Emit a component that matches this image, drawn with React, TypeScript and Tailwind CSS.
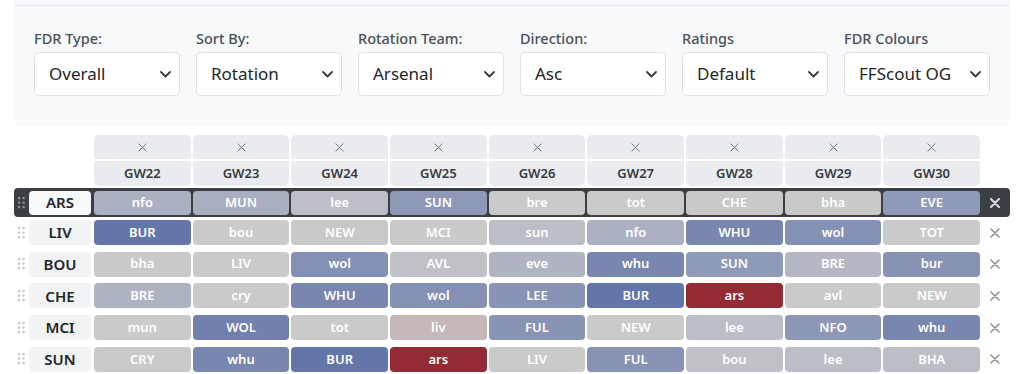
import React from "react";

const filters = [
  { label: "FDR Type:", value: "Overall" },
  { label: "Sort By:", value: "Rotation" },
  { label: "Rotation Team:", value: "Arsenal" },
  { label: "Direction:", value: "Asc" },
  { label: "Ratings", value: "Default" },
  { label: "FDR Colours", value: "FFScout OG" },
];

const gws = ["GW22", "GW23", "GW24", "GW25", "GW26", "GW27", "GW28", "GW29", "GW30"];

type Cell = [string, string];
const rows: { team: string; cells: Cell[] }[] = [
  {
    team: "ARS",
    cells: [
      ["nfo", "#aab0c1"], ["MUN", "#a9afc0"], ["lee", "#bebfc6"], ["SUN", "#8e99b7"], ["bre", "#cacaca"],
      ["tot", "#cacaca"], ["CHE", "#c9c9c9"], ["bha", "#c9c9c9"], ["EVE", "#8e9ab8"],
    ],
  },
  {
    team: "LIV",
    cells: [
      ["BUR", "#6476a9"], ["bou", "#cbcbcb"], ["NEW", "#c8c8c8"], ["MCI", "#c9c9c9"], ["sun", "#bcbec6"],
      ["nfo", "#abb1c3"], ["WHU", "#7986b0"], ["wol", "#8591b4"], ["TOT", "#cacaca"],
    ],
  },
  {
    team: "BOU",
    cells: [
      ["bha", "#c9c9c9"], ["LIV", "#cacaca"], ["wol", "#8591b4"], ["AVL", "#c0c1c7"], ["eve", "#b0b4c2"],
      ["whu", "#7986b0"], ["SUN", "#8f9ab8"], ["BRE", "#b4b7c3"], ["bur", "#8892b5"],
    ],
  },
  {
    team: "CHE",
    cells: [
      ["BRE", "#aeb3c1"], ["cry", "#cacaca"], ["WHU", "#7986b0"], ["wol", "#8591b4"], ["LEE", "#8893b5"],
      ["BUR", "#6476a9"], ["ars", "#932b35"], ["avl", "#cacaca"], ["NEW", "#cacaca"],
    ],
  },
  {
    team: "MCI",
    cells: [
      ["mun", "#cacaca"], ["WOL", "#7380ad"], ["tot", "#cacaca"], ["liv", "#c4b8b9"], ["FUL", "#8893b5"],
      ["NEW", "#cacaca"], ["lee", "#bcbec6"], ["NFO", "#8d98b7"], ["whu", "#7986b0"],
    ],
  },
  {
    team: "SUN",
    cells: [
      ["CRY", "#cacaca"], ["whu", "#7986b0"], ["BUR", "#6476a9"], ["ars", "#932b35"], ["LIV", "#cacaca"],
      ["FUL", "#8893b5"], ["bou", "#c0c1c7"], ["lee", "#bcbec6"], ["BHA", "#bcbec6"],
    ],
  },
];

function Chevron() {
  return (
    <svg width="11" height="7" viewBox="0 0 11 7" fill="none">
      <path d="M1 1l4.5 4.5L10 1" stroke="#343a40" strokeWidth="1.8" strokeLinecap="round" strokeLinejoin="round" />
    </svg>
  );
}

function Handle({ dark }: { dark?: boolean }) {
  const c = dark ? "#8d9196" : "#c3c7cb";
  return (
    <svg width="7" height="12" viewBox="0 0 7 12">
      {[0, 1, 2].map((r) =>
        [0, 1].map((col) => <rect key={`${r}-${col}`} x={col * 4.5} y={r * 4.5} width="2.2" height="2.2" fill={c} />)
      )}
    </svg>
  );
}

function XIcon({ size, color, w }: { size: number; color: string; w: number }) {
  return (
    <svg width={size} height={size} viewBox="0 0 10 10">
      <path d="M1 1l8 8M9 1l-8 8" stroke={color} strokeWidth={w} strokeLinecap="round" />
    </svg>
  );
}

export default function App() {
  return (
    <div className="w-[1024px] h-[374px] overflow-hidden bg-white px-[14px] font-['Noto_Sans',sans-serif]">
      {/* Filter panel */}
      <div className="bg-[#f8f9fa] rounded-b-[8px] h-[126px]">
        <div className="h-[6px] border-b border-[#e5e7eb]" />
        <div className="flex gap-[16px] pl-[20px] pt-[22px]">
          {filters.map((f) => (
            <div key={f.label} className="flex flex-col w-[146px]">
              <div className="text-[14.5px] leading-[20px] font-medium text-[#495057] h-[24px]">{f.label}</div>
              <div className="h-[44px] bg-white border border-[#dee2e6] rounded-[5px] flex items-center justify-between pl-[14px] pr-[8px]">
                <span className="text-[17px] text-[#212529]">{f.value}</span>
                <Chevron />
              </div>
            </div>
          ))}
        </div>
      </div>

      {/* Header */}
      <div className="flex mt-[9px] pl-[80px] pr-[30px]">
        <div className="flex flex-1 gap-[2px]">
          {gws.map((g) => (
            <div key={g} className="flex-1 flex flex-col gap-[2px] rounded-[5px] overflow-hidden">
              <div className="h-[24px] bg-[#e9ebee] flex items-center justify-center">
                <XIcon size={9} color="#6c757d" w={1.1} />
              </div>
              <div className="h-[25px] bg-[#e9ebee] flex items-center justify-center text-[13px] font-semibold text-[#343a40]">
                {g}
              </div>
            </div>
          ))}
        </div>
      </div>

      {/* Rows */}
      <div className="mt-[2px] flex flex-col">
        {rows.map((row, i) => {
          const active = i === 0;
          return (
            <div key={row.team} className={active ? "h-[29px] bg-[#3b3e43] rounded-[4px] flex items-center" : "h-[31.7px] pt-[3px] flex items-start"}>
              <div className="w-[15px] flex justify-center items-center h-[25px]">
                <Handle dark={active} />
              </div>
              <div
                className={`w-[62px] h-[24px] rounded-[4px] flex items-center justify-center text-[15px] font-semibold text-[#212529] ${
                  active ? "bg-[#f8f9fa]" : "bg-[#f1f3f5] h-[25px]"
                }`}
              >
                {row.team}
              </div>
              <div className="flex flex-1 gap-[2px] ml-[3px]">
                {row.cells.map(([t, c], j) => (
                  <div
                    key={j}
                    className={`flex-1 ${active ? "h-[24px]" : "h-[25px]"} rounded-[4px] flex items-center justify-center text-[13px] font-semibold text-white`}
                    style={{ backgroundColor: c }}
                  >
                    {t}
                  </div>
                ))}
              </div>
              <div className={`w-[30px] flex justify-center items-center ${active ? "h-[29px]" : "h-[25px]"}`}>
                {active ? <XIcon size={10} color="#d6d6d6" w={2.2} /> : <XIcon size={10} color="#8e9398" w={1.6} />}
              </div>
            </div>
          );
        })}
      </div>
    </div>
  );
}
